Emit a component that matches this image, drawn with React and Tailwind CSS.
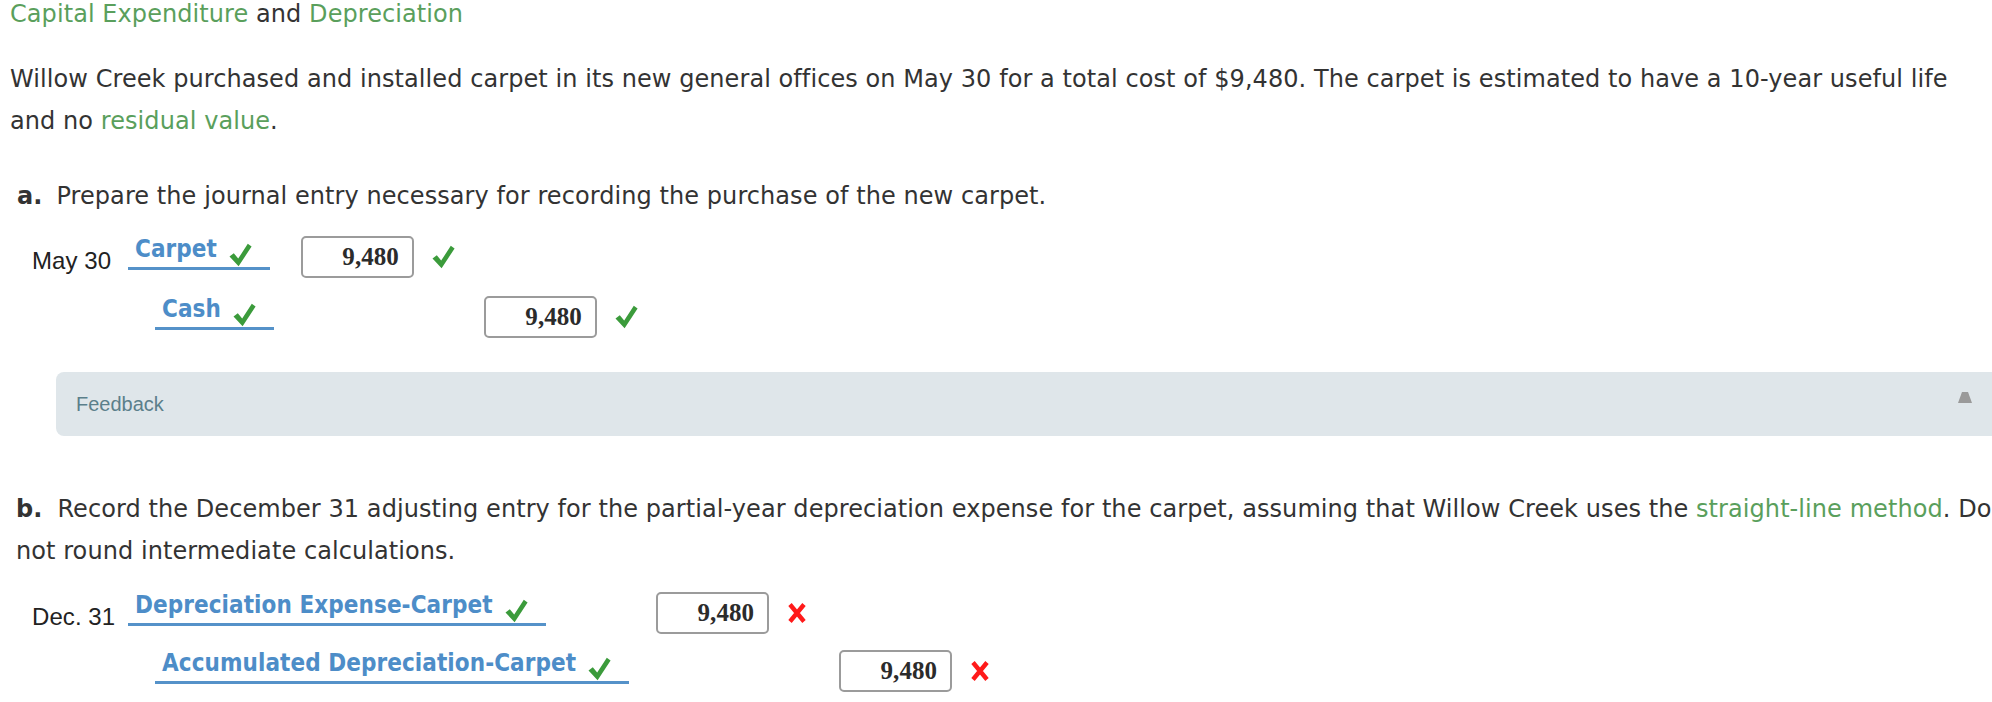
const BODY_FONT = { fontFamily: "'DejaVu Sans', Verdana, sans-serif" };

function Check({ className = "" }) {
    return (
        <svg className={className} width="23" height="24" viewBox="0 0 23 24">
            <path d="M0.5 13.5 L4.8 10.2 L9.2 15.6 L18.8 0.8 L22.6 3.5 L9.6 23.2 Z" fill="#3b9b3b" />
        </svg>
    );
}

function Cross({ className = "" }) {
    return (
        <svg className={className} width="20" height="20" viewBox="0 0 20 20">
            <path d="M3 1.5 L17 18.5 M17 1.5 L3 18.5" stroke="#ff1a1a" strokeWidth="4.4" strokeLinecap="butt" />
        </svg>
    );
}

function Amount({ value }) {
    return (
        <div
            className="w-[113px] h-[42px] rounded-[5px] border-2 border-[#9b9b9b] bg-white flex items-center justify-end pr-[13px] text-[25px] font-bold text-[#2b2b2b]"
            style={{ fontFamily: "'Liberation Serif', 'Times New Roman', serif" }}
        >
            {value}
        </div>
    );
}

function Account({ name, indent }) {
    return (
        <div className={`flex items-end mb-[8px] ${indent ? "ml-[27px]" : ""}`}>
            <div
                className="inline-flex items-end gap-[12px] pl-[7px] pr-[18px] pb-[5px] border-b-[3px] border-[#5592c9] text-[24px] leading-[26px] font-bold text-[#4d8dc8]"
                style={{ fontFamily: "'DejaVu Sans Condensed', 'DejaVu Sans', sans-serif", fontStretch: "condensed" }}
            >
                <span>{name}</span>
                <Check className="shrink-0 -mb-[5px]" />
            </div>
        </div>
    );
}

function JournalEntry({ date, debit, credit, rowGap }) {
    // each line: date | account | debit | credit
    return (
        <div className={`ml-[32px] grid grid-cols-[96px_max-content_183px_max-content] items-end ${rowGap}`}>
            <div
                className="mb-[3px] text-[24px] leading-[28px] text-[#222]"
                style={{ fontFamily: "'Liberation Sans', Arial, sans-serif" }}
            >
                {date}
            </div>
            <div className="pr-[27px]">
                <Account name={debit.account} />
            </div>
            <div className="flex items-center gap-[18px]">
                <Amount value={debit.amount} />
                {debit.ok ? <Check /> : <Cross />}
            </div>
            <div />

            <div />
            <div className="pr-[27px]">
                <Account name={credit.account} indent />
            </div>
            <div />
            <div className="flex items-center gap-[18px]">
                <Amount value={credit.amount} />
                {credit.ok ? <Check /> : <Cross />}
            </div>
        </div>
    );
}

function Term({ children }) {
    return <span className="text-[#5a9f5c]">{children}</span>;
}

export default function App() {
    return (
        <div className="w-full overflow-hidden bg-white min-h-[702px]">
            <div className="w-[2040px] pl-[10px] text-[24px] tracking-[0.07px] text-[#333]" style={BODY_FONT}>
                <h1 className="leading-[28px] font-normal">
                    <Term>Capital Expenditure</Term> and <Term>Depreciation</Term>
                </h1>

                <p className="mt-[30px] leading-[42px] whitespace-nowrap">
                    Willow Creek purchased and installed carpet in its new general offices on May 30 for a total cost of $9,480. The carpet is estimated to have a 10-year useful life
                    <br />
                    and no <Term>residual value</Term>.
                </p>

                <p className="mt-[33px] pl-[7px] leading-[42px] whitespace-nowrap">
                    <span className="font-bold">a.</span>
                    <span className="ml-[14px]">Prepare the journal entry necessary for recording the purchase of the new carpet.</span>
                </p>

                <div className="mt-[19px] -ml-[10px]">
                    <JournalEntry
                        date="May 30"
                        rowGap="gap-y-[18px]"
                        debit={{ account: "Carpet", amount: "9,480", ok: true }}
                        credit={{ account: "Cash", amount: "9,480", ok: true }}
                    />
                </div>

                <div className="mt-[34px] ml-[46px] w-[1956px] h-[64px] rounded-[8px] bg-[#dfe6ea] flex items-center justify-between pl-[20px] pr-[40px]">
                    <span
                        className="text-[20px] tracking-normal text-[#5b7f8b]"
                        style={{ fontFamily: "'Liberation Sans', Arial, sans-serif" }}
                    >
                        Feedback
                    </span>
                    <svg width="14" height="11" viewBox="0 0 14 11" className="-mt-[14px]">
                        <path d="M4 0 H10 L14 11 H0 Z" fill="#9a9a9a" />
                    </svg>
                </div>

                <p className="mt-[52px] pl-[6px] leading-[42px] whitespace-nowrap">
                    <span className="font-bold">b.</span>
                    <span className="ml-[15px]">
                        Record the December 31 adjusting entry for the partial-year depreciation expense for the carpet, assuming that Willow Creek uses the <Term>straight-line method</Term>. Do
                    </span>
                    <br />
                    not round intermediate calculations.
                </p>

                <div className="mt-[20px] -ml-[10px]">
                    <JournalEntry
                        date="Dec. 31"
                        rowGap="gap-y-[16px]"
                        debit={{ account: "Depreciation Expense-Carpet", amount: "9,480", ok: false }}
                        credit={{ account: "Accumulated Depreciation-Carpet", amount: "9,480", ok: false }}
                    />
                </div>
            </div>
        </div>
    );
}
